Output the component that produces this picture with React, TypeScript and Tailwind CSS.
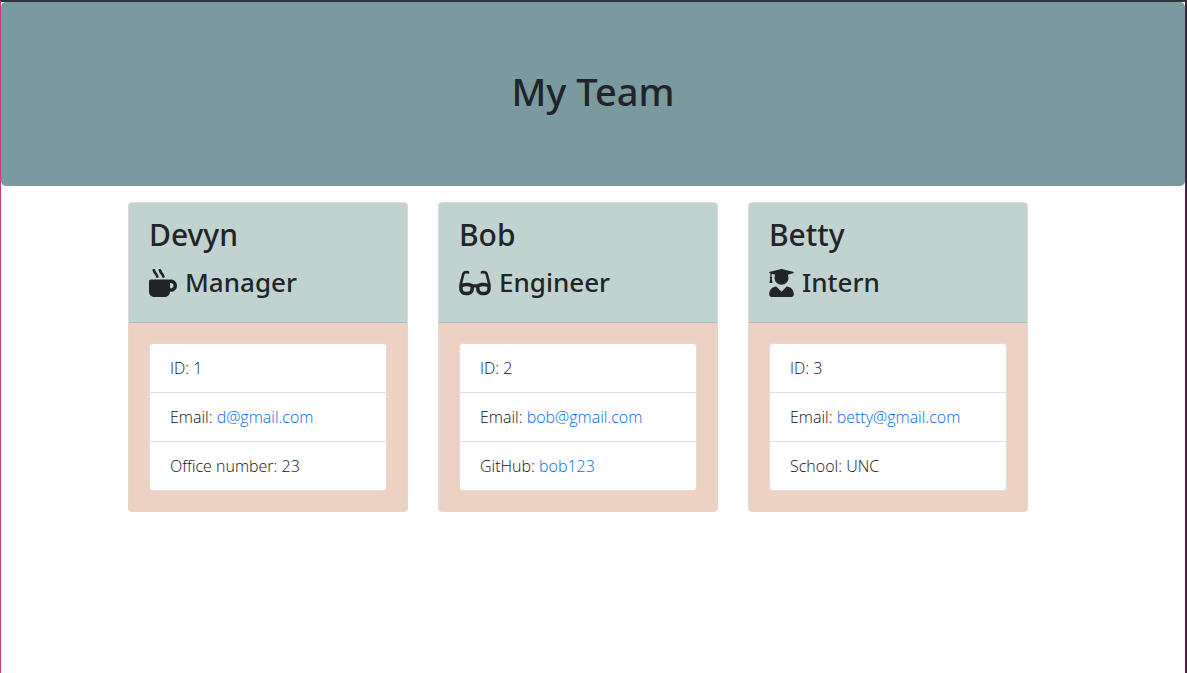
import type { ReactNode } from "react";
import { FaGlasses, FaMugHot, FaUserGraduate } from "react-icons/fa";

type Member = {
  name: string;
  role: string;
  icon: ReactNode;
  id: number;
  email: string;
  extraLabel: string;
  extra: ReactNode;
};

const linkClass = "text-[#006ae8] hover:underline";

const team: Member[] = [
  {
    name: "Devyn",
    role: "Manager",
    icon: <FaMugHot className="shrink-0" />,
    id: 1,
    email: "d@gmail.com",
    extraLabel: "Office number",
    extra: "23",
  },
  {
    name: "Bob",
    role: "Engineer",
    icon: <FaGlasses className="h-7 w-8 shrink-0" />,
    id: 2,
    email: "bob@gmail.com",
    extraLabel: "GitHub",
    extra: (
      <a className={linkClass} href="https://github.com/bob123">
        bob123
      </a>
    ),
  },
  {
    name: "Betty",
    role: "Intern",
    icon: <FaUserGraduate className="h-7 w-[25px] shrink-0" />,
    id: 3,
    email: "betty@gmail.com",
    extraLabel: "School",
    extra: "UNC",
  },
];

function MemberCard({ member }: { member: Member }) {
  return (
    <article className="w-[280px] overflow-hidden rounded border border-[#dfd8d3] bg-[#edd2c4]">
      <header className="border-b border-[#a9b8b6] bg-[#c1d3d0] px-5 pt-3 pb-5">
        <h2 className="mb-2 font-['Noto_Sans',sans-serif] text-[30px] leading-10 font-medium">{member.name}</h2>
        <h3 className="flex items-center gap-2 font-['Noto_Sans',sans-serif] text-[26px] leading-[39px] font-medium">
          <span className="flex text-[28px]">{member.icon}</span>
          {member.role}
        </h3>
      </header>
      <div className="p-5">
        <ul className="divide-y divide-[#dfdfdf] rounded border border-[#e5dcd7] bg-white text-[16px] leading-6 font-light text-[#101214]">
          <li className="px-5 py-3">ID: {member.id}</li>
          <li className="px-5 py-3">
            Email:{" "}
            <a className={linkClass} href={`mailto:${member.email}`}>
              {member.email}
            </a>
          </li>
          <li className="px-5 py-3">
            {member.extraLabel}: {member.extra}
          </li>
        </ul>
      </div>
    </article>
  );
}

export default function App() {
  return (
    <div className="min-h-screen border-t-2 border-r-2 border-l border-t-[#303539] border-r-[#4a1f3d] border-l-[#d43a80] bg-white font-['Open_Sans','Noto_Sans',sans-serif] text-[#212529]">
      <header className="mb-4 rounded-[5px] bg-[#7a9aa0] px-8 pt-[61px] pb-[67px]">
        <h1 className="text-center font-['Noto_Sans',sans-serif] text-[38px] leading-14 font-medium">My Team</h1>
      </header>
      <main className="flex flex-wrap justify-center gap-[30px] pr-[30px]">
        {team.map((member) => (
          <MemberCard key={member.id} member={member} />
        ))}
      </main>
    </div>
  );
}
